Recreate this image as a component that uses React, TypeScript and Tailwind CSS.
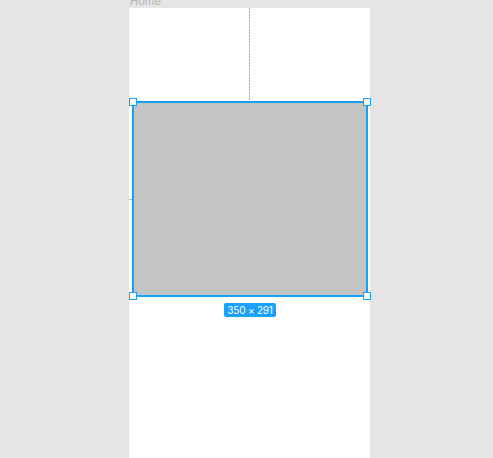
import React from 'react';

function Handle({ className }: { className: string }) {
  return (
    <div
      className={`absolute h-[8px] w-[8px] border border-[#18a0fb] bg-white ${className}`}
    />
  );
}

export default function App() {
  return (
    <div
      className="h-[458px] w-[493px] overflow-hidden bg-[#e5e5e5]"
      style={{ fontFamily: 'Inter, "Noto Sans", sans-serif' }}
    >
      <div className="ml-[129px] w-[241px]">
        <div className="-mt-[5px] h-[13px] pl-[1px] text-[11px] leading-[13px] text-[#b3b3b3]">
          Home
        </div>
        <div className="relative h-[450px] w-[241px] bg-white">
          {/* distance guide from frame top */}
          <div className="absolute left-[120px] top-0 h-[92px] w-[1px] bg-[repeating-linear-gradient(to_bottom,#5cb8f7_0_2px,transparent_2px_3px)]" />
          {/* tiny left marker */}
          <div className="absolute left-0 top-[191px] h-[1px] w-[3px] bg-[#18a0fb] opacity-60" />

          <div className="pl-[3px] pt-[93px]">
            <div className="relative h-[196px] w-[236px] border-2 border-[#18a0fb] bg-[#c4c4c4]">
              <Handle className="-left-[5px] -top-[5px]" />
              <Handle className="-right-[5px] -top-[5px]" />
              <Handle className="-bottom-[5px] -left-[5px]" />
              <Handle className="-bottom-[5px] -right-[5px]" />
            </div>
            <div className="mt-[6px] flex w-[236px] justify-center">
              <div className="rounded-[2px] bg-[#18a0fb] px-[3px] text-[10px] leading-[14px] tracking-[-0.2px] text-white">
                350 × 291
              </div>
            </div>
          </div>
        </div>
      </div>
    </div>
  );
}
